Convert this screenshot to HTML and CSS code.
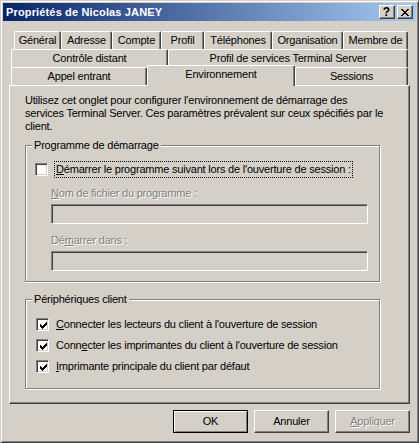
FILE: index.html
```html
<!DOCTYPE html>
<html lang="fr">
<head>
<meta charset="utf-8">
<title>Propriétés de Nicolas JANEY</title>
<link rel="stylesheet" href="styles.css">
</head>
<body>
<div class="window">
  <div class="titlebar">
    <span class="title">Propriétés de Nicolas JANEY</span>
    <div class="tbtns">
      <span class="tbtn help">?</span>
      <span class="tbtn close"><svg width="8" height="7" viewBox="0 0 8 7" shape-rendering="crispEdges"><path d="M0 0h2v1H0zM6 0h2v1H6zM1 1h2v1H1zM5 1h2v1H5zM2 2h4v1H2zM3 3h2v1H3zM2 4h4v1H2zM1 5h2v1H1zM5 5h2v1H5zM0 6h2v1H0zM6 6h2v1H6z" fill="#000"/></svg></span>
    </div>
  </div>
  <div class="content">
    <div class="tabs">
      <div class="tabrow r1">
        <div class="tab t-gen">Général</div>
        <div class="tab t-adr">Adresse</div>
        <div class="tab t-cpt">Compte</div>
        <div class="tab t-prf">Profil</div>
        <div class="tab t-tel">Téléphones</div>
        <div class="tab t-org">Organisation</div>
        <div class="tab t-mbr">Membre de</div>
      </div>
      <div class="tabrow r2">
        <div class="tab t-ctl">Contrôle distant</div>
        <div class="tab t-pts">Profil de services Terminal Server</div>
      </div>
      <div class="tabrow r3">
        <div class="tab t-app">Appel entrant</div>
        <div class="tab t-env sel">Environnement</div>
        <div class="tab t-ses">Sessions</div>
      </div>
    </div>
    <div class="panel">
      <p class="desc">Utilisez cet onglet pour configurer l'environnement de démarrage des<br>services Terminal Server. Ces paramètres prévalent sur ceux spécifiés par le<br>client.</p>

      <div class="group g1">
        <span class="legend">Programme de démarrage</span>
        <div class="cbrow">
          <span class="cb"></span>
          <span class="cblabel focus"><u>D</u>émarrer le programme suivant lors de l'ouverture de session :</span>
        </div>
        <span class="flabel first"><u>N</u>om de fichier du programme :</span>
        <div class="textbox"></div>
        <span class="flabel second">Dé<u>m</u>arrer dans :</span>
        <div class="textbox"></div>
      </div>

      <div class="group g2">
        <span class="legend">Périphériques client</span>
        <div class="cbrow first">
          <span class="cb"><svg class="tick" width="7" height="7" viewBox="0 0 7 7" shape-rendering="crispEdges"><path d="M0 2H1V3H2V4H3V3H4V2H5V1H6V0H7V3H6V4H5V5H4V6H3V7H2V6H1V5H0Z" fill="#000"/></svg></span>
          <span class="cblabel"><u>C</u>onnecter les lecteurs du client à l'ouverture de session</span>
        </div>
        <div class="cbrow">
          <span class="cb"><svg class="tick" width="7" height="7" viewBox="0 0 7 7" shape-rendering="crispEdges"><path d="M0 2H1V3H2V4H3V3H4V2H5V1H6V0H7V3H6V4H5V5H4V6H3V7H2V6H1V5H0Z" fill="#000"/></svg></span>
          <span class="cblabel">Conn<u>e</u>cter les imprimantes du client à l'ouverture de session</span>
        </div>
        <div class="cbrow">
          <span class="cb"><svg class="tick" width="7" height="7" viewBox="0 0 7 7" shape-rendering="crispEdges"><path d="M0 2H1V3H2V4H3V3H4V2H5V1H6V0H7V3H6V4H5V5H4V6H3V7H2V6H1V5H0Z" fill="#000"/></svg></span>
          <span class="cblabel"><u>I</u>mprimante principale du client par défaut</span>
        </div>
      </div>
    </div>
    <div class="buttons">
      <div class="btn default">OK</div>
      <div class="btn">Annuler</div>
      <div class="btn disabled"><span><u>A</u>ppliquer</span></div>
    </div>
  </div>
</div>
</body>
</html>
```
FILE: styles.css
```css
* { box-sizing: border-box; }
html, body { margin: 0; padding: 0; background: #D4D0C8; }
body {
  font-family: "Liberation Sans", Arial, sans-serif;
  font-size: 11px;
  line-height: 13px;
  letter-spacing: -0.2px;
  color: #000;
}
.window {
  width: 419px;
  height: 443px;
  border: 1px solid;
  border-color: #D4D0C8 #404040 #404040 #D4D0C8;
  box-shadow: inset 1px 1px #fff, inset -1px -1px #808080;
  padding: 2px;
  background: #D4D0C8;
  display: flex;
  flex-direction: column;
}
.titlebar {
  height: 18px;
  flex: none;
  background: linear-gradient(to right, #0A246A, #A6CAF0);
  display: flex;
  align-items: center;
  padding: 0 3px 0 3px;
}
.title {
  flex: 1;
  color: #fff;
  font-weight: bold;
  letter-spacing: 0.15px;
  white-space: nowrap;
}
.tbtns { display: flex; gap: 2px; }
.tbtn {
  width: 16px;
  height: 14px;
  background: #D4D0C8;
  border: 1px solid;
  border-color: #fff #404040 #404040 #fff;
  box-shadow: inset -1px -1px #808080;
  display: flex;
  align-items: center;
  justify-content: center;
}
.help { font-weight: bold; font-size: 12px; line-height: 12px; padding-right: 1px; letter-spacing: 0; }
.close svg { display: block; }

.content { padding: 10px 6px 0 6px; }

.tabrow { display: flex; height: 18px; }
.r1 { padding: 0 2px 0 5px; }
.r2, .r3 { padding: 0 2px 0 2px; }
.tab {
  flex: none;
  height: 18px;
  border-top: 1px solid #fff;
  border-left: 1px solid #fff;
  border-right: 1px solid #404040;
  box-shadow: inset -1px 0 #808080;
  border-radius: 2px 2px 0 0;
  text-align: center;
  padding-top: 2px;
  white-space: nowrap;
  background: #D4D0C8;
}
.t-gen { width: 47px; }
.t-adr { width: 51px; }
.t-cpt { width: 49px; }
.t-prf { width: 43px; }
.t-tel { width: 68px; }
.t-org { width: 71px; }
.t-mbr { width: 65px; }
.t-ctl { width: 157px; }
.t-pts { width: 240px; }
.t-app { width: 136px; }
.t-env { width: 148px; }
.t-ses { width: 113px; }
.tab.sel {
  height: 21px;
  margin-top: -2px;
  position: relative;
  z-index: 1;
}

.panel {
  height: 319px;
  border: 1px solid;
  border-color: #fff #404040 #404040 #fff;
  box-shadow: inset -1px -1px #808080;
  padding: 8px 0 0 15px;
}
.desc { margin: 0; white-space: nowrap; }

.group {
  width: 355px;
  border: 1px solid #808080;
  box-shadow: inset 1px 1px #fff, 1px 1px #fff;
  display: flex;
  flex-direction: column;
  align-items: flex-start;
}
.g1 { margin-top: 12px; height: 137px; }
.g2 { margin-top: 17px; height: 90px; }
.legend {
  margin: -7px 0 0 6px;
  padding: 0 2px;
  background: #D4D0C8;
}
.cbrow {
  display: flex;
  align-items: center;
  height: 17px;
  padding-left: 9px;
  margin-top: 4px;
}
.g1 .cbrow { margin-top: 9px; }
.g2 .cbrow { padding-left: 10px; }
.g2 .cbrow.first { margin-top: 10px; }
.g2 .cblabel { margin-left: 5px; }
.cb {
  width: 13px;
  height: 13px;
  flex: none;
  background: #fff;
  border: 1px solid;
  border-color: #808080 #fff #fff #808080;
  box-shadow: inset 1px 1px #404040, inset -1px -1px #D4D0C8;
  padding: 2px;
}
.tick { display: block; margin: 1px 0 0 1px; }
.cblabel {
  margin-left: 6px;
  padding: 1px 1px;
  border: 1px solid transparent;
  white-space: nowrap;
}
.cblabel.focus { border: 1px dotted #000; }
.flabel {
  margin-left: 25px;
  color: #808080;
  text-shadow: 1px 1px 0 #fff;
}
.flabel.first { margin-top: 9px; }
.flabel.second { margin-top: 10px; }
.textbox {
  width: 317px;
  height: 20px;
  margin: 4px 0 0 25px;
  border: 1px solid;
  border-color: #808080 #fff #fff #808080;
  box-shadow: inset 1px 1px #404040, inset -1px -1px #D4D0C8;
}

.buttons {
  display: flex;
  justify-content: flex-end;
  gap: 6px;
  margin-top: 6px;
}
.btn {
  width: 75px;
  height: 23px;
  border: 1px solid;
  border-color: #fff #404040 #404040 #fff;
  box-shadow: inset -1px -1px #808080;
  display: flex;
  align-items: center;
  justify-content: center;
}
.btn.default {
  border-color: #000;
  box-shadow: inset 1px 1px #fff, inset -1px -1px #808080;
}
.btn.disabled {
  color: #808080;
  text-shadow: 1px 1px 0 #fff;
}
```
